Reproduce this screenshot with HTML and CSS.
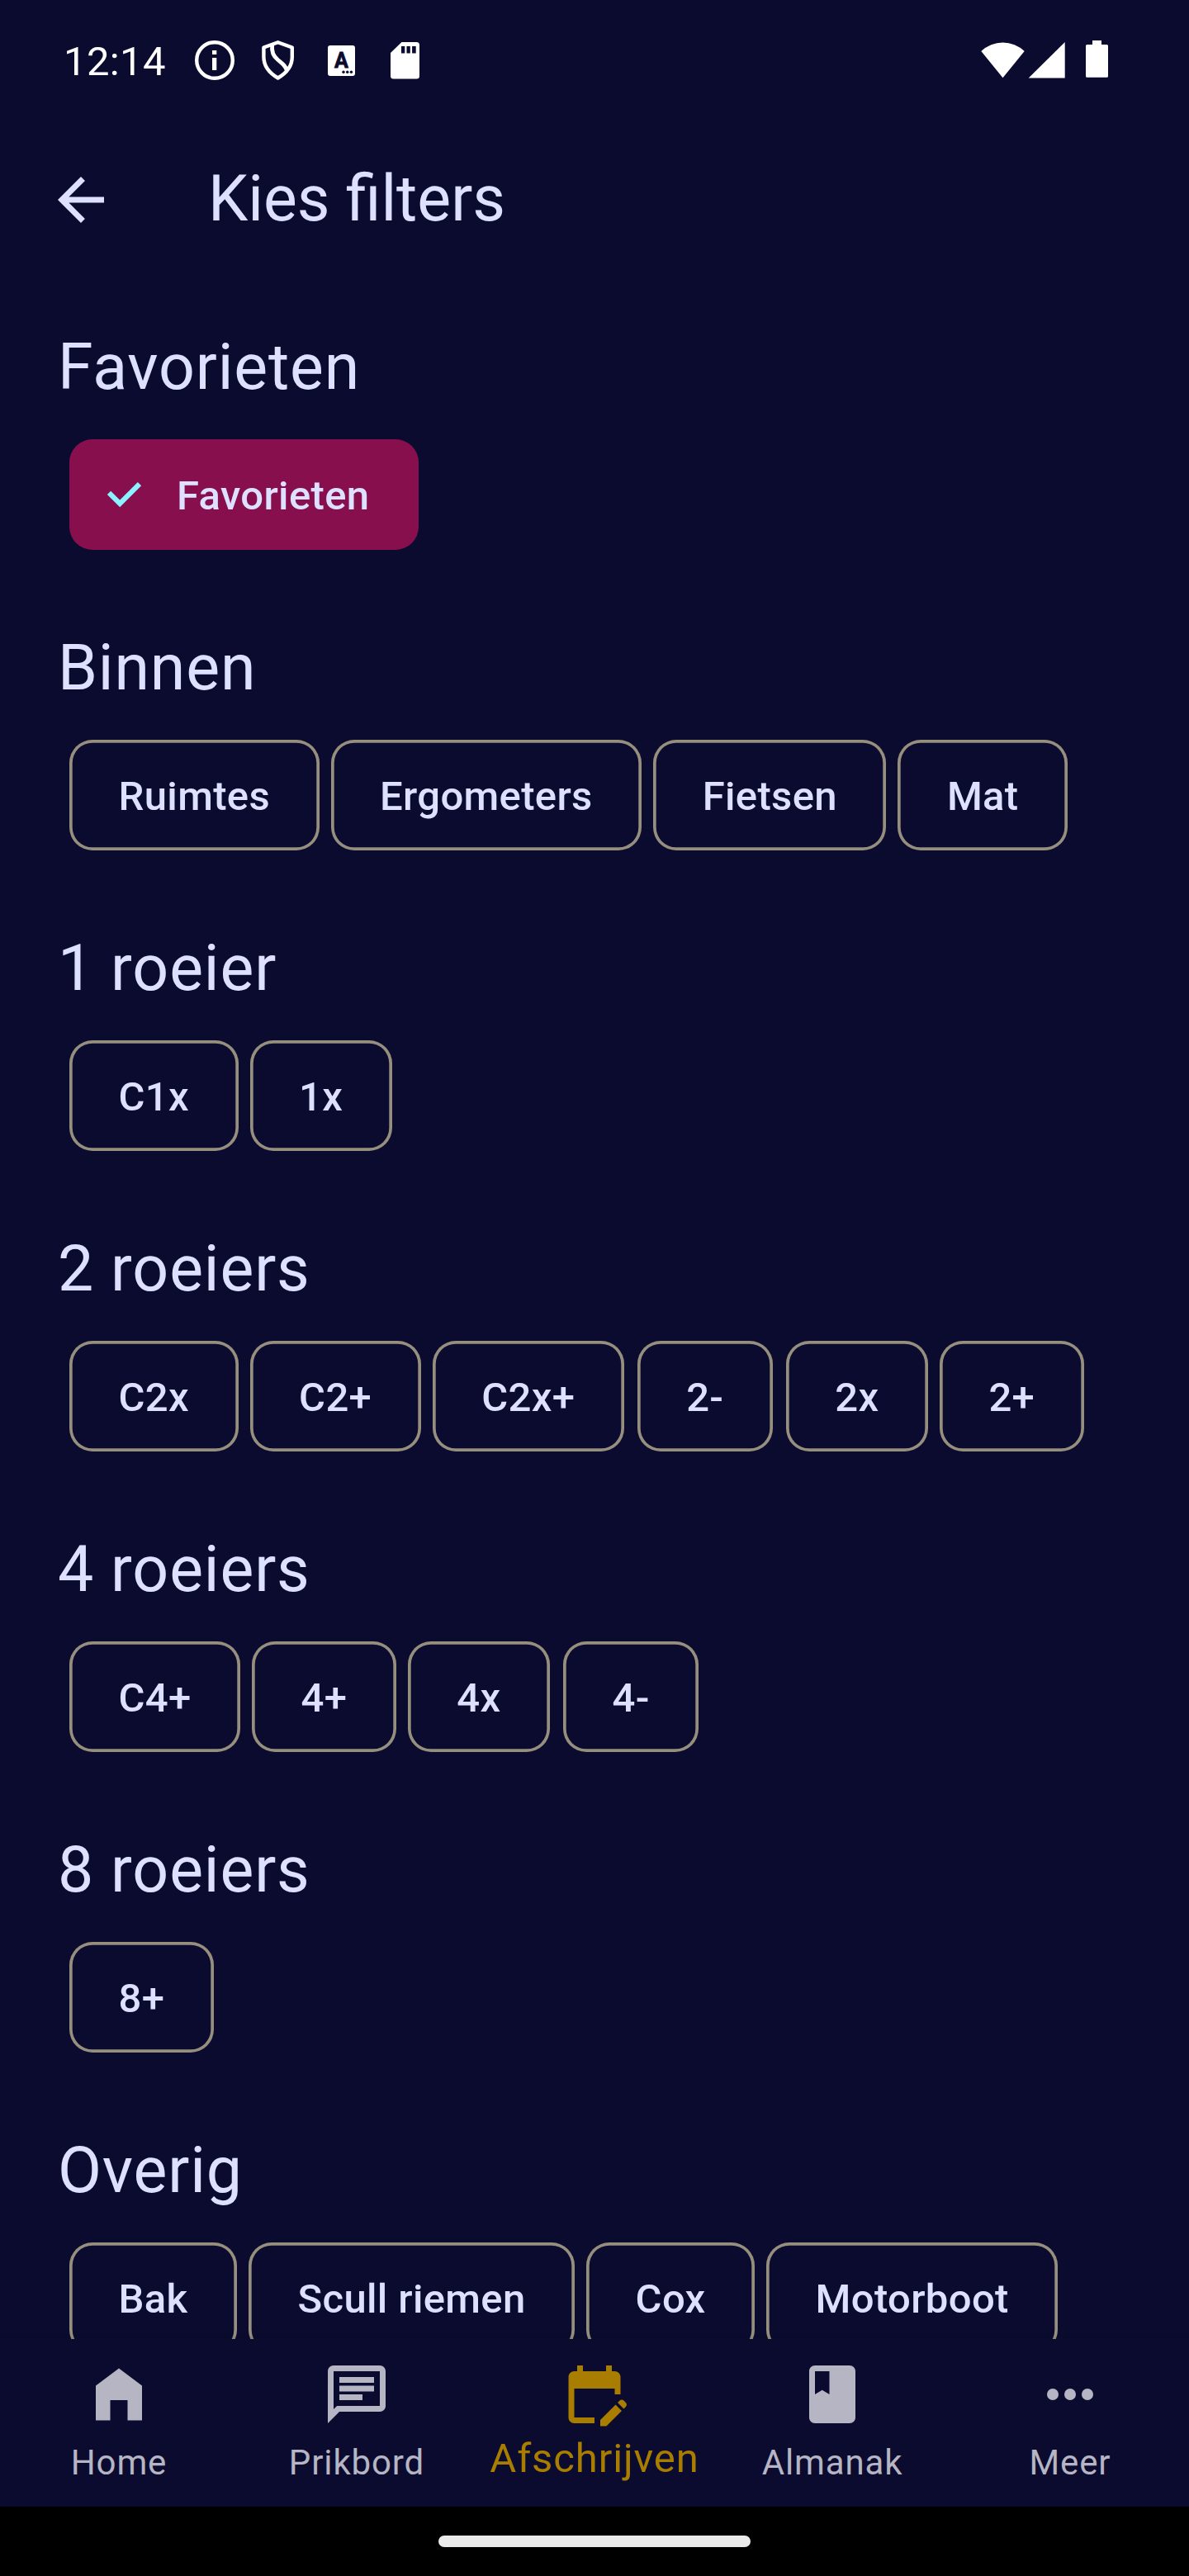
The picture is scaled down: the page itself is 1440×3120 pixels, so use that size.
FILE: index.html
```html
<!DOCTYPE html>
<html lang="nl">
<head>
<meta charset="utf-8">
<title>Kies filters</title>
<link rel="stylesheet" href="styles.css">
</head>
<body>
<div class="screen">
  <header class="status">
    <span class="clock">12:14</span>
    <svg class="status-left" width="272" height="60" viewBox="230 43 272 60" fill="#fff">
      <circle cx="260" cy="73" r="21.8" fill="none" stroke="#fff" stroke-width="4.4"/>
      <path d="M257 61h5.300v5H257zM257 70h5.300v15H257z"/>
      <path d="M336.600 51.300 353.800 57.500v11.500c0 10.500-7 19.500-17.200 25.500-10.200-6-17.200-15-17.200-25.500V57.500z" fill="none" stroke="#fff" stroke-width="4.400" stroke-linejoin="round"/>
      <path d="M329.700 54.500C328.500 63 331 68 336.500 72.500S345.500 79 347.300 85" fill="none" stroke="#fff" stroke-width="4.800"/>
      <rect x="397" y="55" width="33" height="37" rx="3"/>
      <text class="badge-letter" x="413.400" y="81.500" text-anchor="middle">A</text>
      <g class="badge-dots"><circle cx="416" cy="87.200" r="1.700"/><circle cx="420.700" cy="87.200" r="1.700"/><circle cx="425.400" cy="87.200" r="1.700"/></g>
      <path fill-rule="evenodd" d="M486.500 51h18a3.500 3.500 0 0 1 3.500 3.500v37.500a3.500 3.500 0 0 1-3.500 3.500h-28a3.500 3.500 0 0 1-3.500-3.500V64zM486 56v8.500h4.300V56zm6.500 0v8.500h4.300V56zm6.600 0v8.500h4.600V56z"/>
    </svg>
    <svg class="status-right" width="160" height="60" viewBox="1186 43 160 60" fill="#fff">
      <path d="M1214.500 94.300 1188.300 62a38 38 0 0 1 52.400 0z"/>
      <path d="M1289.700 51v43.600h-44z"/>
      <path d="M1323 49h11v5h6.500a1.500 1.500 0 0 1 1.500 1.500v36.700a1.500 1.500 0 0 1-1.500 1.500h-24a1.500 1.500 0 0 1-1.500-1.500V55.500a1.500 1.500 0 0 1 1.500-1.500h6.500z"/>
    </svg>
  </header>

  <div class="appbar">
    <svg class="icon" viewBox="0 0 24 24"><path d="M20 11H7.830l5.590-5.590L12 4l-8 8 8 8 1.410-1.410L7.830 13H20z"/></svg>
    <h1 class="title">Kies filters</h1>
  </div>

  <main class="filters">
    <section class="group">
      <h2 class="heading">Favorieten</h2>
      <div class="chips">
        <span class="chip selected"><svg class="check" width="53" height="53" viewBox="0 0 53 53"><path d="M8 23.800 21.200 37 45 13.200"/></svg>Favorieten</span>
      </div>
    </section>
    <section class="group">
      <h2 class="heading">Binnen</h2>
      <div class="chips">
        <span class="chip">Ruimtes</span><span class="chip">Ergometers</span><span class="chip">Fietsen</span><span class="chip">Mat</span>
      </div>
    </section>
    <section class="group">
      <h2 class="heading">1 roeier</h2>
      <div class="chips">
        <span class="chip">C1x</span><span class="chip">1x</span>
      </div>
    </section>
    <section class="group">
      <h2 class="heading">2 roeiers</h2>
      <div class="chips">
        <span class="chip">C2x</span><span class="chip">C2+</span><span class="chip">C2x+</span><span class="chip narrow">2-</span><span class="chip">2x</span><span class="chip">2+</span>
      </div>
    </section>
    <section class="group">
      <h2 class="heading">4 roeiers</h2>
      <div class="chips">
        <span class="chip">C4+</span><span class="chip">4+</span><span class="chip">4x</span><span class="chip narrow">4-</span>
      </div>
    </section>
    <section class="group">
      <h2 class="heading">8 roeiers</h2>
      <div class="chips">
        <span class="chip">8+</span>
      </div>
    </section>
    <section class="group">
      <h2 class="heading">Overig</h2>
      <div class="chips">
        <span class="chip">Bak</span><span class="chip">Scull riemen</span><span class="chip">Cox</span><span class="chip">Motorboot</span>
      </div>
    </section>
  </main>

  <nav class="tabs">
    <a class="tab"><svg class="icon" viewBox="0 0 24 24"><path d="M4 21V9l8-6 8 6v12h-5v-7H9v7z"/></svg><span class="label">Home</span></a>
    <a class="tab"><svg class="icon" viewBox="0 0 24 24"><path d="M4 4h16v12H5.170L4 17.170V4m0-2c-1.100 0-1.990.9-1.990 2L2 22l4-4h14c1.100 0 2-.9 2-2V4c0-1.100-.9-2-2-2H4zm2 10h8v2H6v-2zm0-3h12v2H6V9zm0-3h12v2H6V6z"/></svg><span class="label">Prikbord</span></a>
    <a class="tab active"><svg class="icon" viewBox="0 0 24 24"><path d="M12 22H5c-1.110 0-2-.9-2-2L3.010 6c0-1.100.88-2 1.990-2h1V2h2v2h8V2h2v2h1c1.100 0 2 .9 2 2v6h-2v-2H5v10h7v2zm10.130-5.010.71-.71c.39-.39.39-1.020 0-1.410l-.71-.71c-.39-.39-1.020-.39-1.410 0l-.71.71 2.120 2.120zm-.71.71-5.300 5.300H14v-2.120l5.300-5.300 2.120 2.120z"/></svg><span class="label">Afschrijven</span></a>
    <a class="tab"><svg class="icon" viewBox="0 0 24 24"><path d="M18 2H6c-1.100 0-2 .9-2 2v16c0 1.100.9 2 2 2h12c1.100 0 2-.9 2-2V4c0-1.100-.9-2-2-2zM6 4h5v8l-2.500-1.500L6 12V4z"/></svg><span class="label">Almanak</span></a>
    <a class="tab"><svg class="icon" viewBox="0 0 24 24"><circle cx="6" cy="12" r="2"/><circle cx="12" cy="12" r="2"/><circle cx="18" cy="12" r="2"/></svg><span class="label">Meer</span></a>
  </nav>
  <footer class="gesture"><div class="handle"></div></footer>
</div>
</body>
</html>
```
FILE: styles.css
```css
* { box-sizing: border-box; }

body {
  margin: 0;
  background: #0b0b30;
  color: #dde1ff;
  font-family: Roboto, sans-serif;
}

.screen {
  display: flex;
  flex-direction: column;
  width: 1440px;
  height: 3120px;
  overflow: hidden;
}

.status {
  display: flex;
  align-items: center;
  height: 146px;
  padding: 0 94px 0 77px;
  color: #fff;
}

.clock {
  width: 153px;
  padding-top: 3px;
  font-size: 49px;
  line-height: 60px;
  letter-spacing: 0.35px;
}

.status svg { flex: none; overflow: visible; }
.status-right { margin-left: auto; }

.badge-letter {
  fill: #0b0b30;
  stroke: #0b0b30;
  stroke-width: 0.8px;
  font-size: 25px;
  font-weight: 700;
}

.badge-dots { fill: #0b0b30; }

.appbar {
  display: flex;
  align-items: center;
  gap: 112px;
  height: 192px;
  padding: 0 56px;
}

.icon {
  display: block;
  flex: none;
  width: 84px;
  height: 84px;
  fill: currentColor;
}

.title {
  margin: -2px 0 0;
  font-size: 77px;
  font-weight: 400;
  line-height: 98px;
}

.filters {
  flex: 1;
  min-height: 0;
  overflow: hidden;
  padding-top: 58px;
}

.group { height: 364px; }

.heading {
  margin: 0 0 38px;
  padding-left: 70px;
  font-size: 77px;
  font-weight: 400;
  line-height: 98px;
  letter-spacing: 0.875px;
}

.chips {
  display: flex;
  gap: 14px;
  padding-left: 84px;
}

.chip {
  display: flex;
  align-items: center;
  height: 134px;
  padding: 3px 59.5px 0;
  border-radius: 28px;
  box-shadow: inset 0 0 0 3.7px #968f7e;
  font-size: 49px;
  font-weight: 500;
  letter-spacing: 0.35px;
  white-space: nowrap;
}

.chip.narrow { margin: 0 1.9px; }

.chip.selected {
  padding-left: 40px;
  background: #880f4d;
  box-shadow: none;
}

.check {
  margin: 0 37px 3px 0;
  fill: none;
  stroke: #8cf2ff;
  stroke-width: 6.1px;
}

.tabs {
  display: flex;
  height: 203px;
  background: #0b0b30;
  box-shadow: 0 0 6px rgba(0, 0, 0, 0.2);
  color: #b6b5c3;
}

.tab {
  display: flex;
  flex: 1;
  flex-direction: column;
  align-items: center;
  padding-top: 25px;
}

.label {
  margin-top: 16px;
  font-size: 42px;
  line-height: 50px;
  letter-spacing: 0.875px;
}

.active { color: #a87d00; }

.active .label {
  margin-top: 7px;
  font-size: 49px;
  line-height: 58px;
}

.gesture {
  display: flex;
  justify-content: center;
  height: 84px;
  padding-top: 35px;
  background: #000;
}

.handle {
  width: 378px;
  height: 14px;
  border-radius: 7px;
  background: #ebebeb;
}
```
